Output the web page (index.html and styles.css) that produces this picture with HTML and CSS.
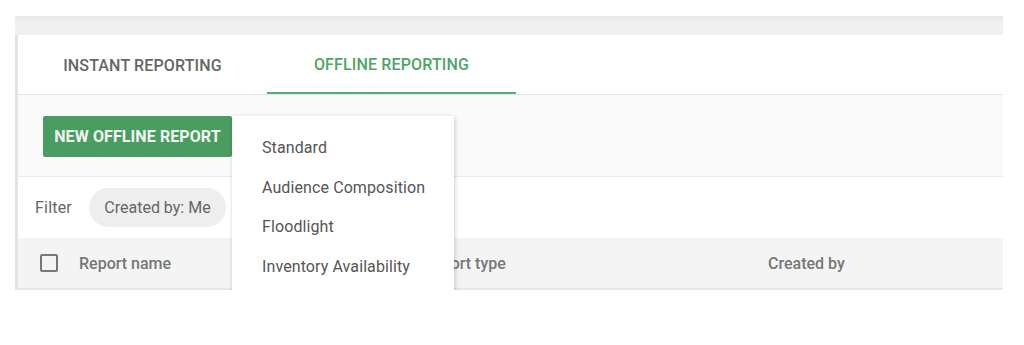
FILE: index.html
```html
<!DOCTYPE html>
<html>
<head>
<meta charset="utf-8">
<link rel="stylesheet" href="styles.css">
</head>
<body>
<div class="page">
  <div class="topbar"></div>
  <div class="card">
    <div class="tabs">
      <div class="tab">INSTANT REPORTING</div>
      <div class="tab active">OFFLINE REPORTING</div>
    </div>
    <div class="toolbar">
      <button class="btn">NEW OFFLINE REPORT</button>
    </div>
    <div class="filter">
      <span class="filter-label">Filter</span>
      <span class="chip">Created by: Me</span>
    </div>
    <div class="thead">
      <div class="col col-name"><span class="checkbox"></span><span>Report name</span></div>
      <div class="col col-type">Report type</div>
      <div class="col col-by">Created by</div>
    </div>
    <div class="menu">
      <div class="menu-item">Standard</div>
      <div class="menu-item">Audience Composition</div>
      <div class="menu-item">Floodlight</div>
      <div class="menu-item">Inventory Availability</div>
    </div>
  </div>
</div>
</body>
</html>
```
FILE: styles.css
```css
* { box-sizing: border-box; }
html, body { margin: 0; padding: 0; background: #fff; }
body { font-family: Roboto, "Liberation Sans", Arial, sans-serif; }
.page { padding: 16px 21px 0 15px; }
.topbar {
  height: 19px;
  background: linear-gradient(#e8e8e8, #f1f1f1 40%, #f0f0f0);
}
.card {
  position: relative;
  background: #fff;
  border-left: 3px solid #e3e3e3;
}
.tabs {
  display: flex;
  height: 60px;
  border-bottom: 1px solid #e6e6e6;
}
.tab {
  width: 249px;
  display: flex;
  align-items: center;
  justify-content: center;
  font-size: 16px;
  font-weight: 500;
  color: #666;
  letter-spacing: 0.15px;
  padding-top: 2px;
}
.tab.active {
  color: #4fa466;
  border-bottom: 2px solid #5aac71;
}
.toolbar {
  height: 82px;
  background: #fafafa;
  border-bottom: 1px solid #ebebeb;
  padding: 21px 0 0 25px;
}
.btn {
  display: block;
  height: 41px;
  width: 189px;
  border: none;
  border-radius: 2px;
  background: #4a9d60;
  color: #f2f7f3;
  font-family: inherit;
  font-size: 16px;
  font-weight: 700;
  padding: 0;
  letter-spacing: 0.1px;
}
.filter {
  height: 61px;
  display: flex;
  align-items: center;
  padding-left: 17px;
}
.filter-label {
  font-size: 16px;
  color: #666;
  letter-spacing: 0.2px;
}
.chip {
  margin-left: 17px;
  height: 39px;
  width: 137px;
  border-radius: 20px;
  background: #eeeeee;
  display: flex;
  align-items: center;
  justify-content: center;
  font-size: 16px;
  color: #666;
}
.thead {
  height: 52px;
  background: #f4f4f4;
  border-bottom: 2px solid #e7e7e9;
  display: flex;
  align-items: center;
  font-size: 16px;
  font-weight: 500;
  color: #777;
}
.col { display: flex; align-items: center; }
.col-name { width: 405px; padding-left: 22px; }
.checkbox {
  width: 18px;
  height: 18px;
  border: 2px solid #777;
  border-radius: 2px;
  margin-right: 21px;
}
.col-type { width: 345px; }
.menu {
  position: absolute;
  left: 214px;
  top: 81px;
  width: 222px;
  height: 176px;
  background: #fff;
  box-shadow: 1px 2px 5px rgba(0,0,0,0.18), 0 0 2px rgba(0,0,0,0.06);
  padding-top: 12px;
  overflow: hidden;
}
.menu-item {
  height: 39.5px;
  display: flex;
  align-items: center;
  padding-left: 30px;
  font-size: 16px;
  color: #555;
  letter-spacing: 0.1px;
}
```
